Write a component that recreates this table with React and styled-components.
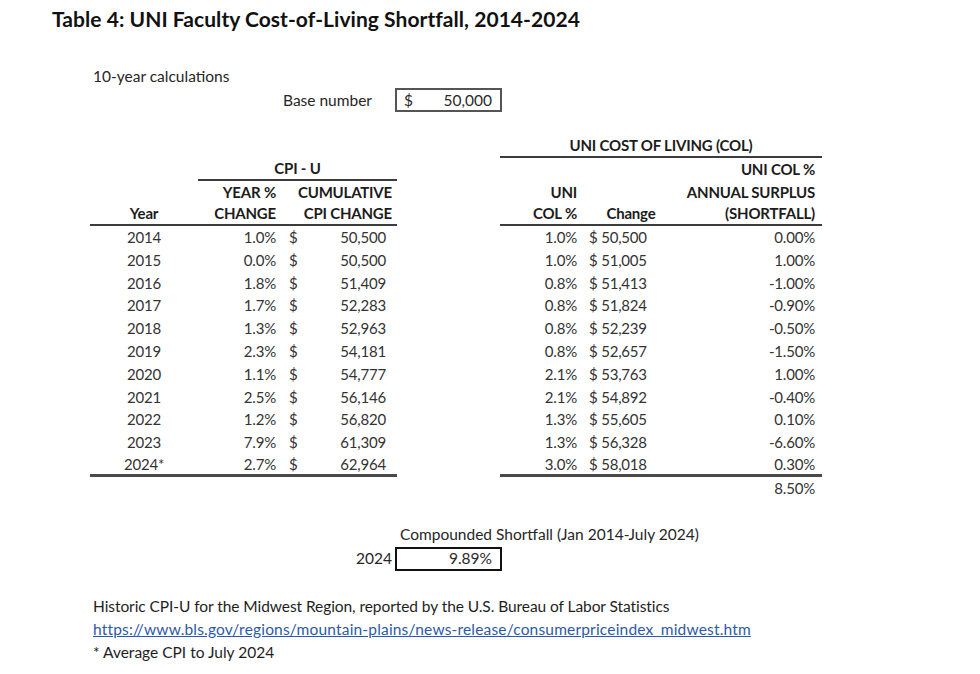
import React from "react";
import styled, { createGlobalStyle } from "styled-components";

const GlobalStyle = createGlobalStyle`
  html, body {
    margin: 0;
    padding: 0;
    background: #ffffff;
  }
  body {
    font-family: "Lato", "Noto Sans", sans-serif;
    color: #262626;
  }
`;

const Page = styled.div`
  width: 980px;
  height: 674px;
  padding-left: 52px;
  box-sizing: border-box;
  overflow: hidden;
`;

const Title = styled.h1`
  margin: 7px 0 0;
  font-size: 21px;
  line-height: 24px;
  font-weight: 700;
  color: #111;
  letter-spacing: 0.05px;
`;

const Body = styled.div`
  margin-left: 38px;
  font-size: 15.5px;
  line-height: 23px;
`;

const Note = styled.div`
  margin: ${(p) => p.$top || 0}px 0 0 3px;
`;

const BoxRow = styled.div`
  display: flex;
  align-items: center;
  height: 24px;
  padding-left: ${(p) => p.$indent}px;
  margin-top: ${(p) => p.$top || 0}px;
`;

const BoxLabel = styled.span`
  width: ${(p) => p.$width};
  text-align: ${(p) => p.$align || "right"};
  margin-right: ${(p) => p.$gap}px;
  white-space: nowrap;
`;

const ValueBox = styled.div`
  width: 107px;
  height: 24px;
  box-sizing: border-box;
  border: ${(p) => (p.$heavy ? "2.5px solid #111" : "2px solid #555")};
  display: flex;
  align-items: center;
  justify-content: ${(p) => (p.$split ? "space-between" : "flex-end")};
  padding: 0 8px 0 7px;
  color: #2a2a2a;
`;

const Tables = styled.div`
  display: flex;
  gap: 103px;
  margin-top: 23px;
  font-size: 15px;
  letter-spacing: -0.2px;
`;

const Grid = styled.div`
  display: grid;
  grid-template-columns: ${(p) => p.$cols};
  grid-auto-rows: 22.8px;
`;

const Cell = styled.div`
  grid-column: ${(p) => p.$span || "auto"};
  display: flex;
  align-items: center;
  justify-content: ${(p) =>
    p.$align === "right" ? "flex-end" : p.$align === "center" ? "center" : "flex-start"};
  padding: 0 ${(p) => p.$pr || 0}px 0 ${(p) => p.$pl || 0}px;
  box-sizing: border-box;
  font-weight: ${(p) => (p.$head ? 700 : 400)};
  color: ${(p) => (p.$head ? "#1c1c1c" : "#333")};
  border-bottom: ${(p) =>
    p.$rule === "heavy" ? "3px solid #4a4a4a" : p.$rule ? "2px solid #3c3c3c" : "none"};
  white-space: nowrap;
`;

const Footer = styled.div`
  margin: 24px 0 0 3px;
  color: #1e1e1e;
`;

const FootLine = styled.div`
  letter-spacing: ${(p) => p.$track || 0}px;
`;

const Link = styled.a`
  color: #2c5aa8;
  text-decoration: underline;
`;

const cpi = [
  ["2014", "1.0%", "50,500"],
  ["2015", "0.0%", "50,500"],
  ["2016", "1.8%", "51,409"],
  ["2017", "1.7%", "52,283"],
  ["2018", "1.3%", "52,963"],
  ["2019", "2.3%", "54,181"],
  ["2020", "1.1%", "54,777"],
  ["2021", "2.5%", "56,146"],
  ["2022", "1.2%", "56,820"],
  ["2023", "7.9%", "61,309"],
  ["2024*", "2.7%", "62,964"],
];

const col = [
  ["1.0%", "50,500", "0.00%"],
  ["1.0%", "51,005", "1.00%"],
  ["0.8%", "51,413", "-1.00%"],
  ["0.8%", "51,824", "-0.90%"],
  ["0.8%", "52,239", "-0.50%"],
  ["0.8%", "52,657", "-1.50%"],
  ["2.1%", "53,763", "1.00%"],
  ["2.1%", "54,892", "-0.40%"],
  ["1.3%", "55,605", "0.10%"],
  ["1.3%", "56,328", "-6.60%"],
  ["3.0%", "58,018", "0.30%"],
];

function CpiTable() {
  const last = cpi.length - 1;
  return (
    <Grid $cols="108px 84px 18px 97px">
      <Cell $span="1 / 5" />
      <Cell />
      <Cell $head $span="2 / 5" $align="center" $rule>
        CPI - U
      </Cell>
      <Cell />
      <Cell $head $align="right" $pr={6}>
        YEAR %
      </Cell>
      <Cell $head $span="3 / 5" $align="right" $pr={5}>
        CUMULATIVE
      </Cell>
      <Cell $head $align="center" $rule>
        Year
      </Cell>
      <Cell $head $align="right" $pr={6} $rule>
        CHANGE
      </Cell>
      <Cell $head $span="3 / 5" $align="right" $pr={5} $rule>
        CPI CHANGE
      </Cell>
      {cpi.map(([year, pct, val], i) => {
        const rule = i === last ? "heavy" : false;
        return (
          <React.Fragment key={year}>
            <Cell $align="center" $rule={rule}>
              {year}
            </Cell>
            <Cell $align="right" $pr={6} $rule={rule}>
              {pct}
            </Cell>
            <Cell $pl={7} $rule={rule}>
              $
            </Cell>
            <Cell $align="right" $pr={11} $rule={rule}>
              {val}
            </Cell>
          </React.Fragment>
        );
      })}
    </Grid>
  );
}

function ColTable() {
  const last = col.length - 1;
  return (
    <Grid $cols="82px 98px 142px">
      <Cell $head $span="1 / 4" $align="center" $rule>
        UNI COST OF LIVING (COL)
      </Cell>
      <Cell $span="1 / 3" />
      <Cell $head $align="right" $pr={7}>
        UNI COL %
      </Cell>
      <Cell $head $align="right" $pr={5}>
        UNI
      </Cell>
      <Cell />
      <Cell $head $align="right" $pr={7}>
        ANNUAL SURPLUS
      </Cell>
      <Cell $head $align="right" $pr={5} $rule>
        COL %
      </Cell>
      <Cell $head $align="center" $rule>
        Change
      </Cell>
      <Cell $head $align="right" $pr={7} $rule>
        (SHORTFALL)
      </Cell>
      {col.map(([pct, val, gap], i) => {
        const rule = i === last ? "heavy" : false;
        return (
          <React.Fragment key={i}>
            <Cell $align="right" $pr={5} $rule={rule}>
              {pct}
            </Cell>
            <Cell $pl={7} $rule={rule}>
              $ {val}
            </Cell>
            <Cell $align="right" $pr={7} $rule={rule}>
              {gap}
            </Cell>
          </React.Fragment>
        );
      })}
      <Cell $span="1 / 3" />
      <Cell $align="right" $pr={7}>
        8.50%
      </Cell>
    </Grid>
  );
}

export default function App() {
  return (
    <Page>
      <GlobalStyle />
      <Title>Table 4: UNI Faculty Cost-of-Living Shortfall, 2014-2024</Title>
      <Body>
        <Note $top={34}>10-year calculations</Note>
        <BoxRow $indent={193}>
          <BoxLabel $width="87px" $align="left" $gap={25}>
            Base number
          </BoxLabel>
          <ValueBox $split>
            <span>$</span>
            <span>50,000</span>
          </ValueBox>
        </BoxRow>
        <Tables>
          <CpiTable />
          <ColTable />
        </Tables>
        <BoxRow $indent={310} $top={23}>
          <span>Compounded Shortfall (Jan 2014-July 2024)</span>
        </BoxRow>
        <BoxRow $indent={0}>
          <BoxLabel $width="302px" $gap={3}>
            2024
          </BoxLabel>
          <ValueBox $heavy>9.89%</ValueBox>
        </BoxRow>
        <Footer>
          <FootLine $track={-0.07}>
            Historic CPI-U for the Midwest Region, reported by the U.S. Bureau of Labor Statistics
          </FootLine>
          <FootLine $track={0.18}>
            <Link href="#">https://www.bls.gov/regions/mountain-plains/news-release/consumerpriceindex_midwest.htm</Link>
          </FootLine>
          <FootLine>* Average CPI to July 2024</FootLine>
        </Footer>
      </Body>
    </Page>
  );
}
